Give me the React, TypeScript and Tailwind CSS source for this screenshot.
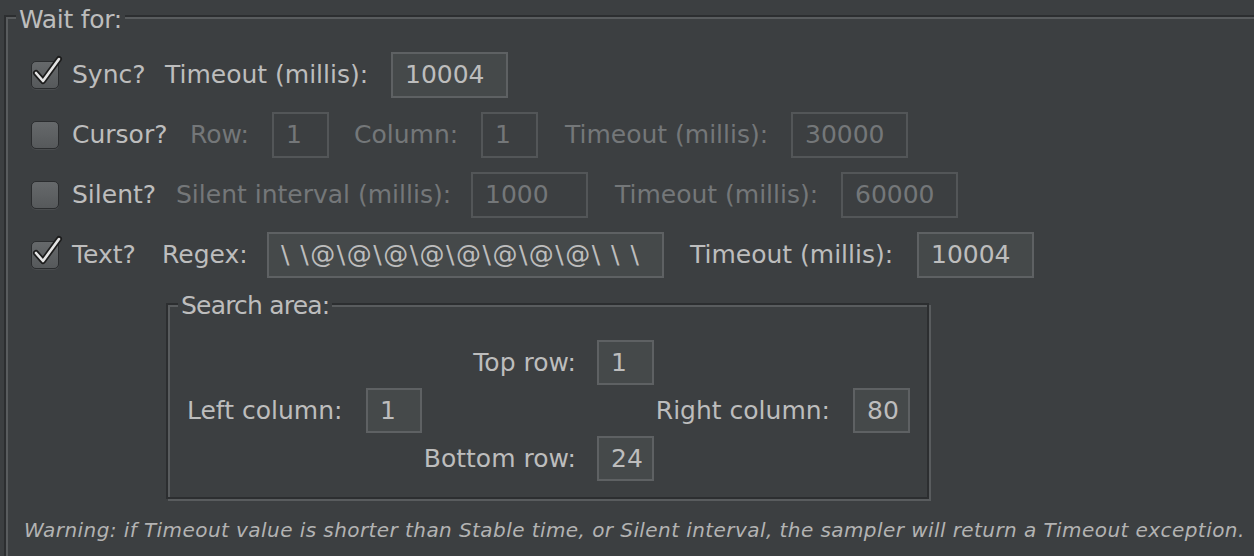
import React from "react";

// etched border look (dark line + light line offset)
const etched =
  "border-2 border-[#2c2e30] shadow-[inset_2px_2px_0_#595c5e,2px_2px_0_#595c5e]";

interface FieldProps {
  value: string;
  w: string;
  h?: string;
  disabled?: boolean;
  extra?: string;
}

const Field: React.FC<FieldProps> = ({ value, w, h = "h-[46px]", disabled, extra = "" }) => (
  <div
    className={`${w} ${h} ${extra} shrink-0 box-border border-2 px-[12px] flex items-center whitespace-pre overflow-hidden ${
      disabled
        ? "border-[#535658] bg-[#3c3f41] text-[#747779]"
        : "border-[#5e6163] bg-[#45494a] text-[#bdbdbd]"
    }`}
  >
    {value}
  </div>
);

const Check: React.FC<{ checked?: boolean }> = ({ checked }) => (
  <div className="relative w-[28px] h-[28px] shrink-0 rounded-[5px] border border-[#2b2d2f] bg-linear-to-b from-[#66696b] to-[#56595b] shadow-[0_1px_0_#4a4d4f]">
    {checked && (
      <svg
        className="absolute left-0 top-[-7px] overflow-visible"
        width="32"
        height="34"
        viewBox="0 0 32 34"
      >
        <polyline
          points="4,18 11,26 27,4"
          fill="none"
          stroke="#1c1c1c"
          strokeWidth="6"
          strokeLinejoin="round"
          strokeLinecap="round"
        />
        <polyline
          points="4,18 11,26 27,4"
          fill="none"
          stroke="#e4e4e4"
          strokeWidth="2.6"
          strokeLinejoin="round"
          strokeLinecap="round"
        />
      </svg>
    )}
  </div>
);

const Lbl: React.FC<{ w: string; dim?: boolean; children: React.ReactNode }> = ({ w, dim, children }) => (
  <span className={`${w} shrink-0 whitespace-nowrap ${dim ? "text-[#747779]" : "text-[#bdbdbd]"}`}>{children}</span>
);

export default function App() {
  const regex = "\\ \\@\\@\\@\\@\\@\\@\\@\\@\\ \\ \\";

  return (
    <div className="w-[1254px] h-[556px] overflow-hidden bg-[#3c3f41] pt-[15px] pl-[4px] font-['DejaVu_Sans',sans-serif] text-[25px] leading-[30px] text-[#bdbdbd]">
      <div className={`relative w-[1300px] h-[600px] ${etched} pt-[35px]`}>
        <span className="absolute left-[10px] top-[-12px] px-[3px] bg-[#3c3f41] tracking-[-0.3px]">Wait for:</span>

        <div className="flex flex-col gap-[14px] pl-[25px]">
          <div className="h-[46px] flex items-center">
            <Check checked />
            <span className="ml-[13px]" />
            <Lbl w="w-[93px]">Sync?</Lbl>
            <Lbl w="w-[226px]">Timeout (millis):</Lbl>
            <Field w="w-[117px]" value="10004" />
          </div>

          <div className="h-[46px] flex items-center">
            <Check />
            <span className="ml-[13px]" />
            <Lbl w="w-[118px]">Cursor?</Lbl>
            <Lbl w="w-[82px]" dim>Row:</Lbl>
            <Field w="w-[57px]" value="1" disabled />
            <span className="ml-[25px]" />
            <Lbl w="w-[127px]" dim>Column:</Lbl>
            <Field w="w-[57px]" value="1" disabled />
            <span className="ml-[27px]" />
            <Lbl w="w-[226px]" dim>Timeout (millis):</Lbl>
            <Field w="w-[117px]" value="30000" disabled />
          </div>

          <div className="h-[46px] flex items-center">
            <Check />
            <span className="ml-[13px]" />
            <Lbl w="w-[104px]">Silent?</Lbl>
            <Lbl w="w-[295px]" dim>Silent interval (millis):</Lbl>
            <Field w="w-[117px]" value="1000" disabled />
            <span className="ml-[27px]" />
            <Lbl w="w-[226px]" dim>Timeout (millis):</Lbl>
            <Field w="w-[117px]" value="60000" disabled />
          </div>

          <div className="h-[46px] flex items-center">
            <Check checked />
            <span className="ml-[13px]" />
            <Lbl w="w-[90px]">Text?</Lbl>
            <Lbl w="w-[105px]">Regex:</Lbl>
            <Field w="w-[397px]" value={regex} extra="tracking-[1.5px]" />
            <span className="ml-[26px]" />
            <Lbl w="w-[227px]">Timeout (millis):</Lbl>
            <Field w="w-[117px]" value="10004" />
          </div>
        </div>

        {/* Search area */}
        <div className={`relative ml-[160px] mt-[25px] w-[763px] ${etched} pt-[35px] pb-[16px] pl-[19px]`}>
          <span className="absolute left-[10px] top-[-14px] px-[3px] bg-[#3c3f41] tracking-[-0.8px]">Search area:</span>
          <div className="grid grid-cols-[179px_56px_175px_57px_199px_57px] grid-rows-[45px_45px_45px] gap-y-[3px] items-center">
            <span className="col-start-3 text-right pr-[21px] whitespace-nowrap">Top row:</span>
            <Field w="w-[57px]" h="h-[45px]" value="1" />
            <span className="col-start-1 whitespace-nowrap">Left column:</span>
            <Field w="w-[56px]" h="h-[45px]" value="1" />
            <span className="col-start-5 text-right pr-[23px] whitespace-nowrap">Right column:</span>
            <Field w="w-[57px]" h="h-[45px]" value="80" />
            <span className="col-start-3 text-right pr-[21px] whitespace-nowrap">Bottom row:</span>
            <Field w="w-[57px]" h="h-[45px]" value="24" />
          </div>
        </div>

        <div className="ml-[18px] mt-[19px] italic text-[20px] tracking-[0.43px] leading-[24px] text-[#b3b3b3] whitespace-nowrap">
          Warning: if Timeout value is shorter than Stable time, or Silent interval, the sampler will return a Timeout exception.
        </div>
      </div>
    </div>
  );
}
